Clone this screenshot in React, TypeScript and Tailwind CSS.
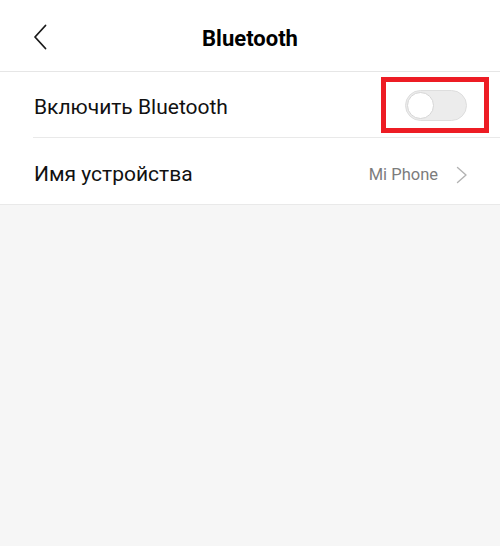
import React from 'react';

function BackIcon() {
  return (
    <svg width="14" height="26" viewBox="0 0 14 26" fill="none">
      <path d="M12.5 1.5 L2 13 L12.5 24.5" stroke="#1a1a1a" strokeWidth="1.8" strokeLinecap="round" strokeLinejoin="round" />
    </svg>
  );
}

function ChevronRight() {
  return (
    <svg width="12" height="18" viewBox="0 0 12 18" fill="none">
      <path d="M1.5 1.5 L10 9 L1.5 16.5" stroke="#b3b3b3" strokeWidth="1.4" strokeLinecap="round" strokeLinejoin="round" />
    </svg>
  );
}

function Toggle() {
  return (
    <div className="w-[62px] h-[31px] rounded-full bg-[#ececec] border border-[#dedede] flex items-center px-[1px]">
      <div className="w-[27px] h-[27px] rounded-full bg-white border-[1.5px] border-[#d6d6d6]" />
    </div>
  );
}

export default function App() {
  return (
    <div
      className="w-[500px] h-[546px] bg-[#f6f6f6] flex flex-col"
      style={{ fontFamily: 'Roboto, "Noto Sans", sans-serif' }}
    >
      <div className="bg-white h-[72px] flex items-center relative border-b border-[#e6e6e6]">
        <div className="pl-[33px] pt-[2px] flex items-center">
          <BackIcon />
        </div>
        <div className="absolute inset-0 flex items-center justify-center pt-[5px]">
          <span className="text-[22px] font-bold text-black">Bluetooth</span>
        </div>
      </div>

      <div className="bg-white pl-[33px] border-b border-[#e9e9e9]">
        <div className="h-[66px] flex items-center justify-between border-b border-[#e9e9e9]">
          <span className="text-[21px] text-[#111] pl-[1px] mt-[7px]">Включить Bluetooth</span>
          <div className="mr-[11px] w-[108px] h-[56px] border-[5px] border-[#ed1c24] flex items-center justify-center pl-[2px] pt-[1px]">
            <Toggle />
          </div>
        </div>
        <div className="h-[66px] flex items-center justify-between pr-[32px]">
          <span className="text-[21px] text-[#111] pl-[1px] mt-[7px]">Имя устройства</span>
          <div className="flex items-center gap-[18px] mt-[7px]">
            <span className="text-[16.5px] text-[#7c7c7c] mt-[2px]">Mi Phone</span>
            <ChevronRight />
          </div>
        </div>
      </div>
    </div>
  );
}
